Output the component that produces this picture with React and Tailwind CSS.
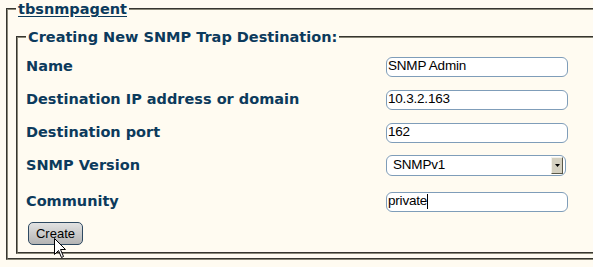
import React from 'react';

const rows = [
    { label: 'Name', value: 'SNMP Admin' },
    { label: 'Destination IP address or domain', value: '10.3.2.163' },
    { label: 'Destination port', value: '162' },
];

const Cursor = () => (
    <svg className="absolute left-[54px] top-[238px]" width="13" height="21" viewBox="0 0 13 21">
        <path d="M0.5 0.5 L0.5 16.5 L4.5 12.5 L7.5 19.5 L9.5 18.5 L6.5 11.5 L11.5 11.5 Z" fill="#fff" stroke="#000" strokeWidth="1" />
    </svg>
);

const App = () => {
    return (
        <div className="relative w-[593px] h-[267px] overflow-hidden bg-[#fffbf1] font-['DejaVu_Sans',sans-serif] text-[#0c3a5c]">
            <fieldset className="ml-[6px] mt-0 border-2 border-r-0 [border-style:groove] border-[#8a8878] pl-[8px] pt-[10px] pb-[4px]">
                <legend className="px-[2px] text-[14.5px] leading-[18px] font-bold underline underline-offset-2">tbsnmpagent</legend>

                <fieldset className="border-2 border-r-0 [border-style:groove] border-[#8a8878] pl-[8px] pt-[4px] pb-[7px]">
                    <legend className="px-[2px] text-[14.5px] leading-[18px] font-bold">Creating New SNMP Trap Destination:</legend>

                    {rows.map((row, i) => (
                        <div className="flex items-center h-[33px]" key={i}>
                            <div className="w-[360px] text-[14.5px] font-bold">{row.label}</div>
                            <div className="w-[182px] h-[20px] rounded-[6px] border border-[#7f9db9] bg-white pl-[1px] flex items-center font-['Liberation_Sans',sans-serif] text-[13.5px] tracking-[-0.2px] text-black">
                                {row.value}
                            </div>
                        </div>
                    ))}

                    <div className="flex items-center h-[33px]">
                        <div className="w-[360px] text-[14.5px] font-bold">SNMP Version</div>
                        <div className="relative w-[180px] h-[21px] rounded-[6px] border border-[#7f9db9] bg-white pl-[6px] flex items-center font-['Liberation_Sans',sans-serif] text-[13.5px] tracking-[-0.2px] text-black">
                            SNMPv1
                            <div className="absolute right-[2px] top-[1px] w-[12px] h-[17px] bg-[#d4d0c0] border border-t-[#f4f2ea] border-l-[#f4f2ea] border-r-[#5a5848] border-b-[#5a5848] flex items-center justify-center">
                                <svg width="5" height="3" viewBox="0 0 5 3"><path d="M0 0 H5 L2.5 3 Z" fill="#000" /></svg>
                            </div>
                        </div>
                    </div>

                    <div className="flex items-center h-[33px] mt-[3px]">
                        <div className="w-[360px] text-[14.5px] font-bold">Community</div>
                        <div className="w-[182px] h-[20px] rounded-[6px] border border-[#7f9db9] bg-white pl-[1px] flex items-center font-['Liberation_Sans',sans-serif] text-[13.5px] tracking-[-0.2px] text-black">
                            private<span className="w-px h-[15px] bg-black" />
                        </div>
                    </div>

                    <button className="mt-[4px] ml-[2px] w-[55px] h-[23px] rounded-[5px] border border-[#2f4a62] bg-gradient-to-b from-[#e2e2e2] to-[#b4b4b4] font-['Liberation_Sans',sans-serif] text-[13px] text-black">
                        Create
                    </button>
                </fieldset>
            </fieldset>
            <Cursor />
        </div>
    );
};

export default App;
